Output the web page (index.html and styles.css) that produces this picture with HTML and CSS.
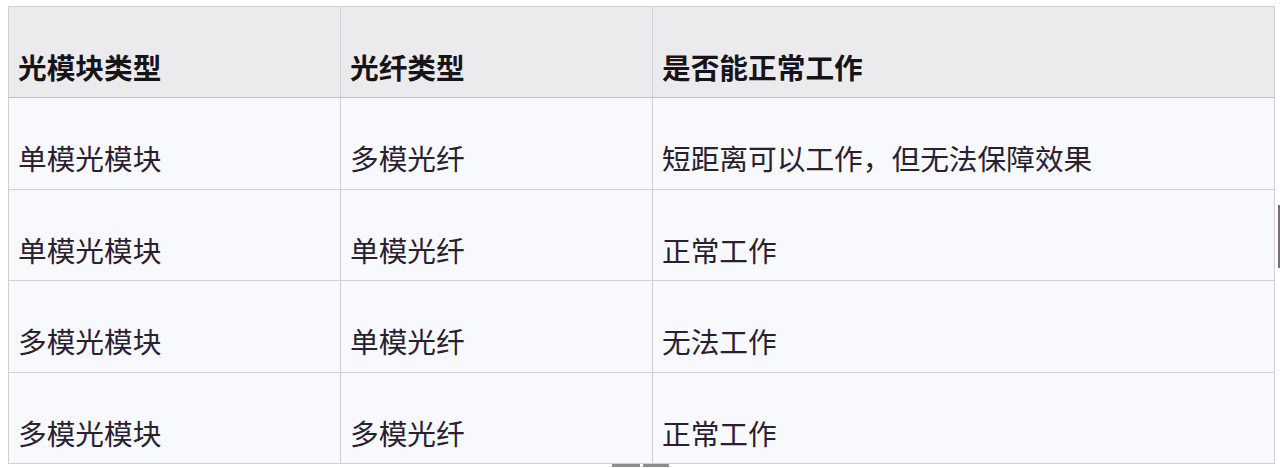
FILE: index.html
```html
<!DOCTYPE html>
<html lang="zh-CN">
<head>
<meta charset="utf-8">
<title>光模块与光纤类型兼容性</title>
<link rel="stylesheet" href="styles.css">
</head>
<body>
<div class="page">
  <table class="compat">
    <colgroup>
      <col class="c1">
      <col class="c2">
      <col class="c3">
    </colgroup>
    <thead>
      <tr>
        <th>光模块类型</th>
        <th>光纤类型</th>
        <th>是否能正常工作</th>
      </tr>
    </thead>
    <tbody>
      <tr>
        <td>单模光模块</td>
        <td>多模光纤</td>
        <td>短距离可以工作，但无法保障效果</td>
      </tr>
      <tr>
        <td>单模光模块</td>
        <td>单模光纤</td>
        <td>正常工作</td>
      </tr>
      <tr>
        <td>多模光模块</td>
        <td>单模光纤</td>
        <td>无法工作</td>
      </tr>
      <tr>
        <td>多模光模块</td>
        <td>多模光纤</td>
        <td>正常工作</td>
      </tr>
    </tbody>
  </table>
  <span class="edge-bar"></span>
  <span class="foot-mark foot-mark-a"></span>
  <span class="foot-mark foot-mark-b"></span>
</div>
</body>
</html>
```

FILE: styles.css
```css
html, body {
  margin: 0;
  padding: 0;
  background: #ffffff;
}

.page {
  position: relative;
  width: 1280px;
  height: 468px;
  padding: 6px 0 0 8px;
  box-sizing: border-box;
  overflow: hidden;
  font-family: "Noto Sans CJK SC", "Noto Sans", sans-serif;
}

.compat {
  border-collapse: collapse;
  table-layout: fixed;
  width: 1266px;
  background: #f8f9fc;
}

.compat .c1 { width: 332px; }
.compat .c2 { width: 312px; }
.compat .c3 { width: 622px; }

.compat th,
.compat td {
  border: 1px solid #cfd0d5;
  padding: 45px 9px 16px;
  line-height: 29.4px;
  font-size: 28.7px;
  text-align: left;
  vertical-align: top;
  white-space: nowrap;
}

.compat th {
  background: #ebebee;
  color: #161418;
  font-weight: 700;
  border-bottom-color: #bfc0c5;
}

.compat td {
  color: #2a2030;
  font-weight: 400;
}

.edge-bar {
  position: absolute;
  left: 1278px;
  top: 205px;
  width: 2px;
  height: 63px;
  background: #7d6d74;
}

.foot-mark {
  position: absolute;
  top: 464px;
  height: 3px;
  background: #8c8c92;
}

.foot-mark-a {
  left: 612px;
  width: 28px;
}

.foot-mark-b {
  left: 643px;
  width: 26px;
}
```
